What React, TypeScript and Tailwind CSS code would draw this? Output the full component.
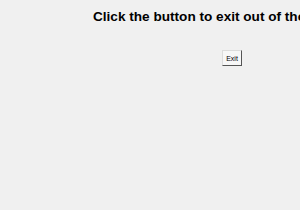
export default function App() {
  return (
    <div className="h-[210px] w-[300px] overflow-hidden bg-[#f0f0f0] font-['Liberation_Sans',Arial,sans-serif]">
      <div className="whitespace-nowrap pl-[93px] pt-[9px] text-[13.6px] font-bold leading-[15px] text-black">
        Click the button to exit out of the window
      </div>
      <div className="pl-[222px] pt-[26px]">
        <button className="flex h-[16px] w-[20px] items-center justify-center border border-[#dcdcdc] border-r-[#555] border-b-[#555] bg-[#f7f7f7] text-[7px] leading-none text-black">
          Exit
        </button>
      </div>
    </div>
  );
}
